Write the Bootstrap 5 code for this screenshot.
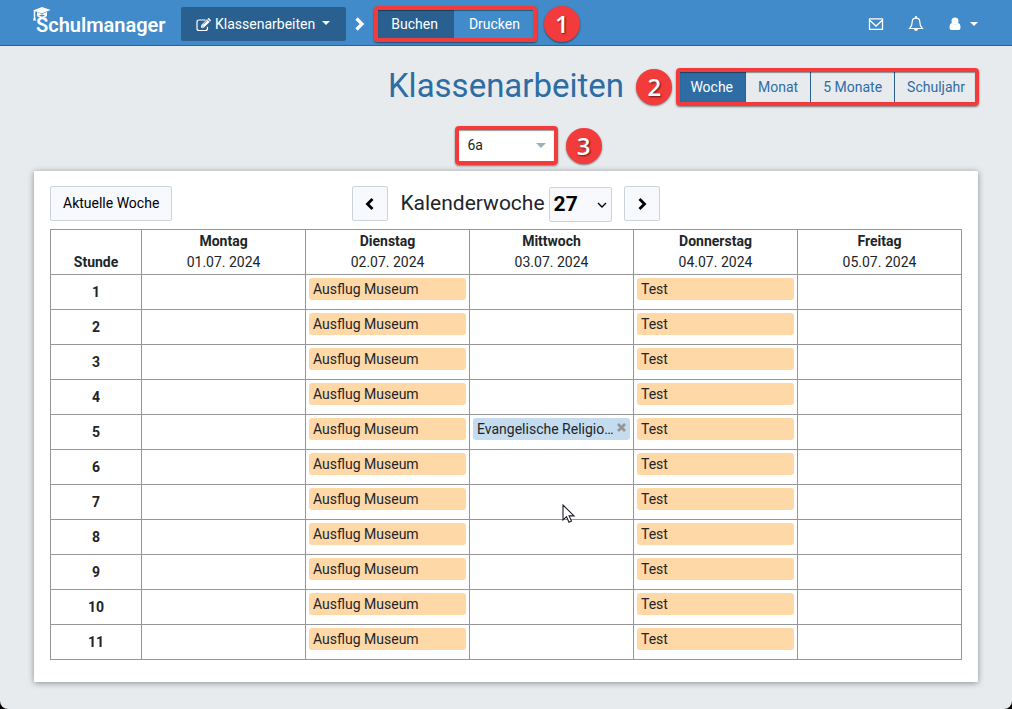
<!DOCTYPE html>
<html lang="de">
<head>
<meta charset="utf-8">
<meta name="viewport" content="width=device-width, initial-scale=1">
<title>Schulmanager – Klassenarbeiten</title>
<link rel="stylesheet" href="https://cdn.jsdelivr.net/npm/bootstrap@5.3.0/dist/css/bootstrap.min.css">
<style>
html { background: #000; }
body {
  --bs-body-font-family: Roboto, "Liberation Sans", sans-serif;
  --bs-body-font-size: 14px;
  --bs-body-color: #212529;
  line-height: 21px;
  min-height: 100vh;
  background: #e7ebee;
  border-radius: 0 0 8px 8px;
}
.btn, .form-select {
  font-size: 14px;
  line-height: 21px;
  border-radius: 2px;
}
.page-gutter { padding-left: 34px; padding-right: 34px; }

.topbar { background: #428bca; border-bottom: 1px solid #2a6496; height: 46px; padding-top: 2px; }
.brand { color: #fff; font-size: 20px; font-weight: 600; line-height: 24px; text-decoration: none; width: 147px; padding: 2px 0 0 2px; }
.brand-cap { position: absolute; left: -1px; top: -4px; }
.btn-nav { --bs-btn-color: #fff; --bs-btn-hover-color: #fff; --bs-btn-active-color: #fff; --bs-btn-hover-bg: #357ebd; --bs-btn-active-bg: #2a6090; --bs-btn-border-width: 0; padding: 7px 16px 6px; height: 34px; }
.btn-nav.active { background: #2a6090; }
.btn-nav.dropdown-toggle { padding-left: 15px; }
.topicon { --bs-btn-color: #fff; --bs-btn-hover-color: #fff; --bs-btn-border-width: 0; --bs-btn-padding-x: 0; --bs-btn-padding-y: 6px; }

.page-head { display: grid; grid-template-columns: 1fr auto 1fr; padding-top: 22px; }
.page-title { font-size: 33px; line-height: 36px; padding-bottom: 2px; font-weight: 400; color: #2e6da4; }
.btn-range { --bs-btn-color: #2e6da4; --bs-btn-border-color: #2a6090; --bs-btn-hover-bg: #2e6da4; --bs-btn-hover-color: #fff; --bs-btn-active-bg: #2e6da4; --bs-btn-active-color: #fff; --bs-btn-active-border-color: #2a6090; padding: 6px 12px; height: 36px; }
.range-bar { gap: 5px; }

.framed { position: relative; }
.framed::after {
  content: ""; position: absolute; inset: -1px; z-index: 5; pointer-events: none;
  border: 4px solid #f43b3b; border-radius: 4px;
  box-shadow: 0 1px 2px rgba(0,0,0,.5), inset 0 1px 1px rgba(0,0,0,.4);
}
.step {
  width: 36px; height: 36px; border-radius: 50%; background: #f43b3b; color: #fff;
  font: 600 24px/36px "Open Sans", sans-serif; text-align: center; flex: none;
  text-shadow: 1px 1px 2px rgba(0,0,0,.6); box-shadow: 0 1px 2px rgba(0,0,0,.5);
}
.class-row { display: grid; grid-template-columns: 1fr auto 1fr; column-gap: 9px; padding-top: 21px; }
.class-select {
  width: 101px; height: 37px; border: 0; padding: 6px 12px; background-color: #fff;
  background-image: url("data:image/svg+xml,%3Csvg xmlns='http://www.w3.org/2000/svg' viewBox='0 0 10 5'%3E%3Cpath d='M0 0h10L5 5z' fill='%23a3afb7'/%3E%3C/svg%3E");
  background-size: 10px 5px; background-position: right 11px center;
}

.sheet { background: #fff; padding: 15px 16px 22px; margin-top: 7px; border-radius: 1px; box-shadow: 0 1px 6px rgba(0,0,0,.4); }
.sheet-tools { display: grid; grid-template-columns: 1fr auto 1fr; }
.btn-plain { --bs-btn-color: #000; --bs-btn-bg: #f8f9fc; --bs-btn-border-color: #ccd3dc; --bs-btn-hover-bg: #eceff5; --bs-btn-hover-border-color: #b9c2ce; height: 35px; padding: 6px 12px; }
.btn-step { width: 36px; padding: 0; }
.week-label { font-size: 21px; line-height: 34px; margin: 0 4px 0 12px; }
.week-select {
  width: 63px; height: 35px; margin: 1px 12px 0 0; padding: 0 4px; font-size: 21px; font-weight: 700; line-height: 33px; color: #000;
  background-color: #f8f9fc; border-color: #ccd3dc;
  background-image: url("data:image/svg+xml,%3Csvg xmlns='http://www.w3.org/2000/svg' viewBox='0 0 10 6'%3E%3Cpath d='M1 1l4 4 4-4' fill='none' stroke='%23000' stroke-width='1.4'/%3E%3C/svg%3E");
  background-size: 10px 6px; background-position: right 4px center;
}

.plan { width: 100%; table-layout: fixed; border-collapse: collapse; margin-top: 7px; }
.plan th, .plan td { border: 1px solid #969696; }
.plan .hour-col { width: 10%; }
.plan thead th { text-align: center; vertical-align: bottom; padding: 1px 3px; height: 45px; }
.plan tbody th { text-align: center; vertical-align: middle; height: 35px; padding: 0; }
.plan tbody td { vertical-align: top; padding: 3px; height: 35px; }
.entry { background: #ffd8a8; border-radius: 3px; padding: 0 4px; height: 22px; line-height: 22px; white-space: nowrap; }
.entry-exam { background: #c5dcef; }
.entry-close { position: absolute; right: 4px; top: 5px; border: 0; padding: 0; background: none; display: flex; }
.pointer { position: absolute; left: 89px; top: 16px; z-index: 3; }
</style>
</head>
<body>
<nav class="topbar page-gutter d-flex align-items-center" aria-label="Hauptnavigation">
  <a class="brand position-relative" href="#">
    <svg class="brand-cap" width="18" height="15" viewBox="0 0 18 15" aria-hidden="true">
      <path d="M0 3.500 9 0l8.500 3L9 6.500z" fill="#fff"/>
      <path d="M4 5v4l5-1.500L14 9V5L9 7.200z" fill="#fff"/>
      <path d="M1.500 4v8M4.500 8.500l8 4M13.500 8.500l-6 3" stroke="#fff" stroke-width="1.500" fill="none"/>
      <path d="M1.500 9 0 13.500h3z" fill="#fff"/>
    </svg>Schulmanager</a>
  <button type="button" class="btn btn-nav active dropdown-toggle" data-bs-toggle="dropdown" aria-expanded="false">
    <svg width="15" height="14" viewBox="0 0 15 14" class="me-1" aria-hidden="true">
      <path d="M9.500 2H3Q1 2 1 4v6.500q0 2 2 2h6.500q2 0 2-2V8.800" fill="none" stroke="#fff" stroke-width="1.200"/>
      <path d="M5 9.800V7.200L11 1.200l2.700 2.700-6 5.900z" fill="#fff"/><path d="m11.500.700.6-.5q.5-.3 1 0l1.600 1.700q.4.500 0 1l-.6.500z" fill="#fff"/>
      <path d="m6 7.600 1.300 1.300M7 6.600l4-4" stroke="#2a6090" stroke-width=".8"/>
    </svg>Klassenarbeiten
  </button>
  <svg class="mx-2" width="13" height="14" viewBox="0 0 13 14" aria-hidden="true"><path d="m2.500 1.500 5.500 5.500-5.500 5.500" fill="none" stroke="#fff" stroke-width="3.200"/></svg>
  <div class="btn-group framed" role="group" aria-label="Ansicht">
    <button type="button" class="btn btn-nav active">Buchen</button>
    <button type="button" class="btn btn-nav">Drucken</button>
  </div>
  <span class="step ms-2">1</span>
  <div class="ms-auto d-flex align-items-center">
    <button type="button" class="btn topicon d-flex me-4" aria-label="Nachrichten">
      <svg width="16" height="14" viewBox="0 0 16 14"><path d="M1.500 1.800h13v10.500h-13zM2 3.500l6 5.500 6-5.500" fill="none" stroke="#fff" stroke-width="1.300"/></svg>
    </button>
    <button type="button" class="btn topicon d-flex me-4" aria-label="Mitteilungen">
      <svg width="16" height="16" viewBox="0 0 16 16"><path d="M8 2.200C5.500 2.200 4.200 4 4.200 6c0 3.500-1 5-2.500 6.500h12.600C12.800 11 11.800 9.500 11.800 6c0-2-1.300-3.800-3.800-3.800z" fill="none" stroke="#fff" stroke-width="1.200"/><path d="M7.200 0h1.600v2H7.200zM6 13h4q-.3 2-2 2t-2-2z" fill="#fff"/></svg>
    </button>
    <button type="button" class="btn topicon dropdown-toggle d-flex align-items-center gap-1" aria-label="Benutzerkonto">
      <svg width="14" height="14" viewBox="0 0 14 14"><circle cx="7" cy="4" r="3.500" fill="#fff"/><path d="M4 6q3 2.800 6 0 2.500.3 2.500 4.500 0 2.500-2 2.500H3.500q-2 0-2-2.500Q1.500 6.300 4 6z" fill="#fff"/></svg>
    </button>
  </div>
</nav>

<main class="page-gutter pb-4">
  <header class="page-head align-items-center">
    <span></span>
    <h1 class="page-title m-0">Klassenarbeiten</h1>
    <div class="range-bar d-flex align-items-center justify-content-end">
      <span class="step">2</span>
      <div class="btn-group framed" role="group" aria-label="Zeitraum">
        <button type="button" class="btn btn-range active">Woche</button>
        <button type="button" class="btn btn-range">Monat</button>
        <button type="button" class="btn btn-range text-nowrap">5 Monate</button>
        <button type="button" class="btn btn-range">Schuljahr</button>
      </div>
    </div>
  </header>

  <div class="class-row align-items-center">
    <span></span>
    <div class="framed">
      <select class="form-select class-select" aria-label="Klasse"><option>6a</option></select>
    </div>
    <span class="step">3</span>
  </div>

  <section class="sheet">
    <div class="sheet-tools align-items-start">
      <div><button type="button" class="btn btn-plain">Aktuelle Woche</button></div>
      <div class="d-flex">
        <button type="button" class="btn btn-plain btn-step" aria-label="Vorherige Woche"><svg width="12" height="14" viewBox="0 0 12 14"><path d="M8.500 2 3.500 7l5 5" fill="none" stroke="#000" stroke-width="2.800"/></svg></button>
        <label class="week-label" for="week">Kalenderwoche</label>
        <select id="week" class="form-select week-select"><option>27</option></select>
        <button type="button" class="btn btn-plain btn-step" aria-label="Nächste Woche"><svg width="12" height="14" viewBox="0 0 12 14"><path d="m3.500 2 5 5-5 5" fill="none" stroke="#000" stroke-width="2.800"/></svg></button>
      </div>
    </div>

    <table class="plan">
      <thead>
        <tr>
          <th class="hour-col" scope="col">Stunde</th>
          <th scope="col">Montag<div class="fw-normal">01.07. 2024</div></th>
          <th scope="col">Dienstag<div class="fw-normal">02.07. 2024</div></th>
          <th scope="col">Mittwoch<div class="fw-normal">03.07. 2024</div></th>
          <th scope="col">Donnerstag<div class="fw-normal">04.07. 2024</div></th>
          <th scope="col">Freitag<div class="fw-normal">05.07. 2024</div></th>
        </tr>
      </thead>
      <tbody>
        <tr><th scope="row">1</th><td></td><td><div class="entry">Ausflug Museum</div></td><td></td><td><div class="entry">Test</div></td><td></td></tr>
        <tr><th scope="row">2</th><td></td><td><div class="entry">Ausflug Museum</div></td><td></td><td><div class="entry">Test</div></td><td></td></tr>
        <tr><th scope="row">3</th><td></td><td><div class="entry">Ausflug Museum</div></td><td></td><td><div class="entry">Test</div></td><td></td></tr>
        <tr><th scope="row">4</th><td></td><td><div class="entry">Ausflug Museum</div></td><td></td><td><div class="entry">Test</div></td><td></td></tr>
        <tr><th scope="row">5</th><td></td><td><div class="entry">Ausflug Museum</div></td>
          <td><div class="entry entry-exam position-relative">Evangelische Religio…<button type="button" class="entry-close" aria-label="Löschen"><svg width="9" height="9" viewBox="0 0 9 9"><path d="m1 1 7 7M8 1 1 8" stroke="#969696" stroke-width="2.800"/></svg></button></div></td>
          <td><div class="entry">Test</div></td><td></td></tr>
        <tr><th scope="row">6</th><td></td><td><div class="entry">Ausflug Museum</div></td><td></td><td><div class="entry">Test</div></td><td></td></tr>
        <tr><th scope="row">7</th><td></td><td><div class="entry">Ausflug Museum</div></td>
          <td><div class="position-relative"><svg class="pointer" width="14" height="20" viewBox="0 0 14 20" aria-hidden="true"><path d="M1 1v15l3.500-3.300L7 18.300l2.500-1.200-2.400-5.200H12z" fill="#fff" stroke="#1c1c28" stroke-width="1.100"/></svg></div></td>
          <td><div class="entry">Test</div></td><td></td></tr>
        <tr><th scope="row">8</th><td></td><td><div class="entry">Ausflug Museum</div></td><td></td><td><div class="entry">Test</div></td><td></td></tr>
        <tr><th scope="row">9</th><td></td><td><div class="entry">Ausflug Museum</div></td><td></td><td><div class="entry">Test</div></td><td></td></tr>
        <tr><th scope="row">10</th><td></td><td><div class="entry">Ausflug Museum</div></td><td></td><td><div class="entry">Test</div></td><td></td></tr>
        <tr><th scope="row">11</th><td></td><td><div class="entry">Ausflug Museum</div></td><td></td><td><div class="entry">Test</div></td><td></td></tr>
      </tbody>
    </table>
  </section>
</main>
<script src="https://cdn.jsdelivr.net/npm/bootstrap@5.3.0/dist/js/bootstrap.bundle.min.js"></script>
</body>
</html>
